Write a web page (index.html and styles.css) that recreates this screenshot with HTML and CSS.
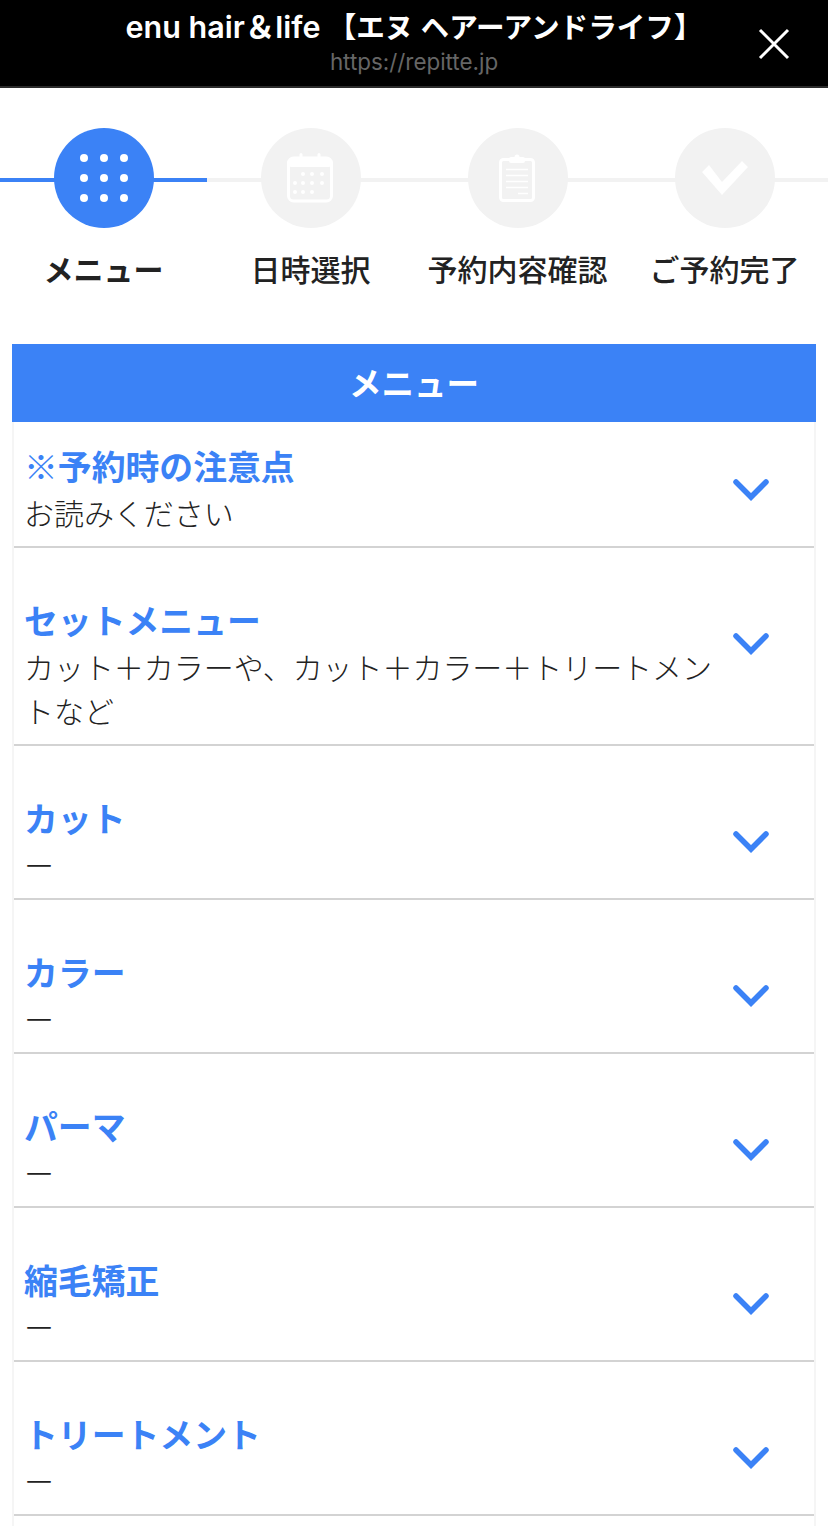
FILE: index.html
```html
<!DOCTYPE html>
<html lang="ja">
<head>
<meta charset="utf-8">
<title>enu hair &amp; life</title>
<link rel="stylesheet" href="styles.css">
</head>
<body>
<header class="topbar">
  <div class="topbar-text">
    <div class="site-title"><span class="site-latin">enu hair＆life</span> 【エヌ ヘアーアンドライフ】</div>
    <div class="site-url">https://repitte.jp</div>
  </div>
  <svg class="close" viewBox="0 0 32 32" width="32" height="32"><path d="M2 2 30 30M30 2 2 30" stroke="#fff" stroke-width="3" fill="none"/></svg>
</header>

<ol class="steps">
  <li class="step is-active">
    <span class="step-circle">
      <svg viewBox="0 0 48 48" width="48" height="48" fill="#fff">
        <circle cx="4" cy="4" r="4"/><circle cx="24" cy="4" r="4"/><circle cx="44" cy="4" r="4"/>
        <circle cx="4" cy="24" r="4"/><circle cx="24" cy="24" r="4"/><circle cx="44" cy="24" r="4"/>
        <circle cx="4" cy="44" r="4"/><circle cx="24" cy="44" r="4"/><circle cx="44" cy="44" r="4"/>
      </svg>
    </span>
    <span class="step-label">メニュー</span>
  </li>
  <li class="step">
    <span class="step-circle">
      <svg class="icon-cal" viewBox="0 0 46 50" width="46" height="50">
        <rect x="1.5" y="5" width="43" height="43" rx="5" fill="none" stroke="#fff" stroke-width="3"/>
        <rect x="1.5" y="5" width="43" height="9" rx="3" fill="#fff"/>
        <path d="M14 1.500v8M32 1.500v8" stroke="#fff" stroke-width="3" stroke-linecap="round"/>
        <g fill="#fff"><circle cx="16" cy="21" r="2"/><circle cx="25" cy="21" r="2"/><circle cx="35" cy="21" r="2"/>
        <circle cx="8" cy="30" r="2"/><circle cx="16" cy="30" r="2"/><circle cx="25" cy="30" r="2"/><circle cx="35" cy="30" r="2"/>
        <circle cx="8" cy="39" r="2"/><circle cx="16" cy="39" r="2"/><circle cx="25" cy="39" r="2"/></g>
      </svg>
    </span>
    <span class="step-label">日時選択</span>
  </li>
  <li class="step">
    <span class="step-circle">
      <svg class="icon-clip" viewBox="0 0 36 48" width="36" height="48">
        <rect x="1.5" y="5.5" width="33" height="41" rx="3" fill="none" stroke="#fff" stroke-width="3"/>
        <rect x="10" y="3" width="16" height="6" rx="2" fill="#fff"/>
        <circle cx="18" cy="3" r="2.5" fill="#fff"/>
        <path d="M7 15.500h22M7 21.500h22M7 27.500h22M7 33.500h22M19 39.500h10" stroke="#fff" stroke-width="1.600"/>
      </svg>
    </span>
    <span class="step-label">予約内容確認</span>
  </li>
  <li class="step">
    <span class="step-circle">
      <svg viewBox="0 0 48 36" width="48" height="36"><polygon points="8,5 1,12 21,35 47,7 41,1 21,22" fill="#fff"/></svg>
    </span>
    <span class="step-label">ご予約完了</span>
  </li>
</ol>

<main class="panel">
  <h2 class="panel-head">メニュー</h2>
  <div class="list">
    <div class="row row-first">
      <div class="row-text"><div class="row-title">※予約時の注意点</div><div class="row-desc">お読みください</div></div>
      <svg class="chev" viewBox="0 0 36 22" width="36" height="22"><path d="M3 3 18 18 33 3" fill="none" stroke="#3b82f6" stroke-width="5.500" stroke-linecap="round" stroke-linejoin="miter"/></svg>
    </div>
    <div class="row">
      <div class="row-text"><div class="row-title">セットメニュー</div><div class="row-desc">カット＋カラーや、カット＋カラー＋トリートメントなど</div></div>
      <svg class="chev" viewBox="0 0 36 22" width="36" height="22"><path d="M3 3 18 18 33 3" fill="none" stroke="#3b82f6" stroke-width="5.500" stroke-linecap="round" stroke-linejoin="miter"/></svg>
    </div>
    <div class="row">
      <div class="row-text"><div class="row-title">カット</div><div class="row-desc">ー</div></div>
      <svg class="chev" viewBox="0 0 36 22" width="36" height="22"><path d="M3 3 18 18 33 3" fill="none" stroke="#3b82f6" stroke-width="5.500" stroke-linecap="round" stroke-linejoin="miter"/></svg>
    </div>
    <div class="row">
      <div class="row-text"><div class="row-title">カラー</div><div class="row-desc">ー</div></div>
      <svg class="chev" viewBox="0 0 36 22" width="36" height="22"><path d="M3 3 18 18 33 3" fill="none" stroke="#3b82f6" stroke-width="5.500" stroke-linecap="round" stroke-linejoin="miter"/></svg>
    </div>
    <div class="row">
      <div class="row-text"><div class="row-title">パーマ</div><div class="row-desc">ー</div></div>
      <svg class="chev" viewBox="0 0 36 22" width="36" height="22"><path d="M3 3 18 18 33 3" fill="none" stroke="#3b82f6" stroke-width="5.500" stroke-linecap="round" stroke-linejoin="miter"/></svg>
    </div>
    <div class="row">
      <div class="row-text"><div class="row-title">縮毛矯正</div><div class="row-desc">ー</div></div>
      <svg class="chev" viewBox="0 0 36 22" width="36" height="22"><path d="M3 3 18 18 33 3" fill="none" stroke="#3b82f6" stroke-width="5.500" stroke-linecap="round" stroke-linejoin="miter"/></svg>
    </div>
    <div class="row">
      <div class="row-text"><div class="row-title">トリートメント</div><div class="row-desc">ー</div></div>
      <svg class="chev" viewBox="0 0 36 22" width="36" height="22"><path d="M3 3 18 18 33 3" fill="none" stroke="#3b82f6" stroke-width="5.500" stroke-linecap="round" stroke-linejoin="miter"/></svg>
    </div>
  </div>
</main>
</body>
</html>
```
FILE: styles.css
```css
* { box-sizing: border-box; }
html, body { margin: 0; padding: 0; }
body {
  height: 100vh;
  overflow: hidden;
  display: flex;
  flex-direction: column;
  background: #fff;
  color: #333;
  font-family: "Inter", "Noto Sans CJK JP", sans-serif;
}

.topbar {
  position: relative;
  flex: none;
  height: 88px;
  background: #000;
  border-bottom: 2px solid #2b2b2b;
  text-align: center;
}
.topbar-text { padding-top: 8px; }
.site-title {
  color: #fff;
  font-size: 28.6px;
  font-weight: 600;
  line-height: 38px;
  white-space: nowrap;
}
.site-latin { font-size: 30.5px; }
.site-url {
  color: #666;
  font-size: 22.4px;
  line-height: 29px;
}
.close { position: absolute; left: 758px; top: 28px; }

.steps {
  flex: none;
  display: grid;
  grid-template-columns: repeat(4, 207px);
  margin: 0;
  padding: 40px 0 0;
  list-style: none;
  height: 256px;
}
.step {
  position: relative;
  display: flex;
  flex-direction: column;
  align-items: center;
}
.step::before {
  content: "";
  position: absolute;
  left: 0;
  right: 0;
  top: 50px;
  height: 4px;
  background: #f2f2f2;
}
.step.is-active::before { background: #3b82f6; }
.step-circle {
  position: relative;
  display: flex;
  align-items: center;
  justify-content: center;
  width: 100px;
  height: 100px;
  border-radius: 50%;
  background: #f2f2f2;
}
.is-active .step-circle { background: #3b82f6; }
.icon-cal, .icon-clip { transform: translate(-1px, 0); }
.step-label {
  margin-top: 18px;
  color: #222;
  font-family: "Noto Sans CJK JP", sans-serif;
  font-size: 30px;
  font-weight: 500;
  line-height: 44px;
  white-space: nowrap;
}
.is-active .step-label { font-weight: 700; }

.panel {
  flex: 1;
  display: flex;
  flex-direction: column;
  margin: 0 12px;
  min-height: 0;
}
.panel-head {
  flex: none;
  margin: 0;
  height: 78px;
  background: #3b82f6;
  color: #fff;
  font-family: "Noto Sans CJK JP", sans-serif;
  font-size: 32.500px;
  font-weight: 700;
  line-height: 75px;
  text-align: center;
}
.list {
  flex: 1;
  border-left: 2px solid #f5f5f5;
  border-right: 2px solid #f5f5f5;
}
.row {
  display: flex;
  align-items: flex-start;
  justify-content: space-between;
  padding: 50px 45px 12px 10px;
  border-bottom: 2px solid #d3d3d3;
  font-family: "Noto Sans CJK JP", sans-serif;
}
.row-first { padding-top: 22px; }
.row-text { width: 700px; }
.row-title {
  color: #3b82f6;
  font-size: 33.850px;
  font-weight: 700;
  line-height: 44px;
  margin-bottom: 2px;
}
.row-desc {
  color: #222;
  font-size: 30px;
  font-weight: 300;
  line-height: 44px;
  letter-spacing: -0.05px;
}
.chev { flex: none; margin-top: 35px; }
```
